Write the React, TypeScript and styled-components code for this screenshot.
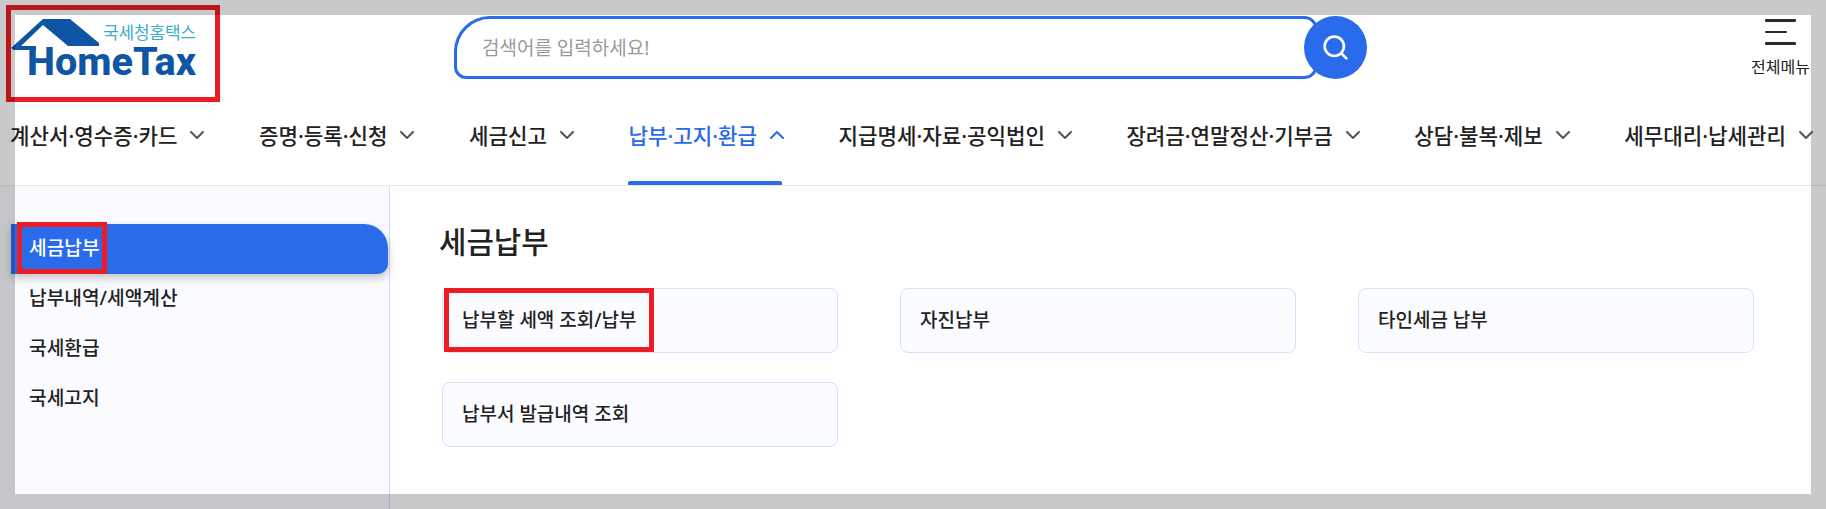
import React from 'react';
import styled, { createGlobalStyle } from 'styled-components';
import { ChevronDown, ChevronUp, Search } from 'lucide-react';

const GlobalStyle = createGlobalStyle`
  html, body {
    margin: 0;
    padding: 0;
    background: #fff;
  }
  body {
    font-family: "Noto Sans", "Noto Sans CJK KR", sans-serif;
    color: #222;
  }
  * {
    box-sizing: border-box;
  }
`;

const navItems = [
  { label: '계산서·영수증·카드' },
  { label: '증명·등록·신청' },
  { label: '세금신고' },
  { label: '납부·고지·환급', active: true },
  { label: '지급명세·자료·공익법인' },
  { label: '장려금·연말정산·기부금' },
  { label: '상담·불복·제보' },
  { label: '세무대리·납세관리' }
];

const sideItems = ['세금납부', '납부내역/세액계산', '국세환급', '국세고지'];

const cards = ['납부할 세액 조회/납부', '자진납부', '타인세금 납부', '납부서 발급내역 조회'];

const Logo = () => (
  <LogoSvg viewBox="0 0 230 100" width="230" height="100">
    <path
      d="M11 48 L43 19 H70 L99 43 V46 H68 L43 25 L21 46 H36 V50 H14 Z"
      fill="#0e56a5"
    />
    <text
      x="27"
      y="75"
      fontFamily="Roboto, sans-serif"
      fontWeight="800"
      fontSize="39.5"
      fill="#0e56a5"
      textLength="169"
      lengthAdjust="spacingAndGlyphs"
    >
      HomeTax
    </text>
    <text
      x="103"
      y="39"
      fontFamily="'Noto Sans CJK KR', sans-serif"
      fontWeight="400"
      fontSize="17"
      fill="#3badc8"
      textLength="93"
    >
      국세청홈택스
    </text>
  </LogoSvg>
);

export default function App() {
  return (
    <Page>
      <GlobalStyle />
      <TopRow>
        <Logo />
        <SearchBox>
          <SearchInput placeholder="검색어를 입력하세요!" />
          <SearchButton>
            <Search size={29} strokeWidth={2.2} color="#fff" />
          </SearchButton>
        </SearchBox>
        <MenuButton>
          <Bars>
            <Bar />
            <Bar $short />
            <Bar />
          </Bars>
          <MenuLabel>전체메뉴</MenuLabel>
        </MenuButton>
      </TopRow>

      <Nav>
        {navItems.map((item) => (
          <NavItem key={item.label} $active={item.active}>
            {item.label}
            <Chevron>
              {item.active ? (
                <ChevronUp size={24} strokeWidth={2} />
              ) : (
                <ChevronDown size={24} strokeWidth={2} color="#555" />
              )}
            </Chevron>
          </NavItem>
        ))}
      </Nav>

      <Body>
        <Sidebar>
          {sideItems.map((label, index) => (
            <SideItem key={label} $active={index === 0}>
              {label}
            </SideItem>
          ))}
        </Sidebar>
        <Main>
          <Heading>세금납부</Heading>
          <CardGrid>
            {cards.map((label) => (
              <Card key={label}>{label}</Card>
            ))}
          </CardGrid>
        </Main>
      </Body>

      <RedBox $left={6} $top={5} $width={214} $height={97} />
      <RedBox $left={17} $top={222} $width={90} $height={52} />
      <RedBox $left={444} $top={288} $width={210} $height={64} />
      <Frame />
    </Page>
  );
}

const Page = styled.div`
  position: relative;
  width: 1826px;
  height: 509px;
  overflow: hidden;
  background: #fff;
`;

const TopRow = styled.header`
  display: flex;
  align-items: flex-start;
  height: 100px;
`;

const LogoSvg = styled.svg`
  display: block;
  flex: none;
`;

const SearchBox = styled.div`
  display: flex;
  align-items: center;
  margin: 16px 0 0 224px;
`;

const SearchInput = styled.input`
  width: 864px;
  height: 63px;
  padding: 0 0 0 25px;
  border: 3px solid #2a6bec;
  border-radius: 36px 14px 14px 12px;
  outline: none;
  background: #fff;
  font: 400 19px "Noto Sans", "Noto Sans CJK KR", sans-serif;
  color: #222;

  &::placeholder {
    color: #999;
    opacity: 1;
  }
`;

const SearchButton = styled.button`
  display: flex;
  align-items: center;
  justify-content: center;
  flex: none;
  width: 63px;
  height: 63px;
  margin-left: -14px;
  padding: 0;
  border: 0;
  border-radius: 50%;
  background: #2a6bec;
  z-index: 1;
`;

const MenuButton = styled.div`
  display: flex;
  flex-direction: column;
  align-items: center;
  margin: 19px 0 0 auto;
  padding-right: 16px;
`;

const Bars = styled.div`
  display: flex;
  flex-direction: column;
  align-items: flex-start;
  gap: 9px;
  width: 31px;
`;

const Bar = styled.span<{ $short?: boolean }>`
  display: block;
  width: ${(p) => (p.$short ? '22px' : '31px')};
  height: ${(p) => (p.$short ? '2px' : '3px')};
  border-radius: 1px;
  background: #2b2b2b;
`;

const MenuLabel = styled.span`
  margin-top: 12px;
  font-size: 16px;
  font-weight: 400;
  line-height: 20px;
  color: #222;
  white-space: nowrap;
`;

const Nav = styled.nav`
  display: flex;
  gap: 49.5px;
  height: 86px;
  padding-left: 10px;
  border-bottom: 1px solid #e6e8ec;
`;

const NavItem = styled.div<{ $active?: boolean }>`
  position: relative;
  display: flex;
  align-items: center;
  gap: 8px;
  flex: none;
  height: 68px;
  font-size: 21.2px;
  font-weight: 500;
  color: ${(p) => (p.$active ? '#2a6bec' : '#222')};
  white-space: nowrap;

  &::after {
    content: '';
    display: ${(p) => (p.$active ? 'block' : 'none')};
    position: absolute;
    left: 0;
    right: 7px;
    top: 81px;
    height: 4px;
    border-radius: 2px 2px 0 0;
    background: #2a6bec;
  }
`;

const Chevron = styled.span`
  display: flex;
  margin-top: 2px;
`;

const Body = styled.div`
  display: flex;
  height: 323px;
`;

const Sidebar = styled.aside`
  flex: none;
  width: 390px;
  padding: 38px 1px 0 11px;
  border-right: 1px solid #cfdcf8;
  background: #f9fbff;
`;

const SideItem = styled.div<{ $active?: boolean }>`
  display: flex;
  align-items: center;
  height: 50px;
  padding: 0 0 4px 18px;
  border-radius: 0 24px 10px 0;
  font-size: 19.2px;
  font-weight: 500;
  color: ${(p) => (p.$active ? '#fff' : '#222')};
  background: ${(p) => (p.$active ? '#2a6bec' : 'transparent')};
  box-shadow: ${(p) => (p.$active ? '0 4px 10px rgba(0, 0, 0, 0.22)' : 'none')};
`;

const Main = styled.main`
  flex: 1;
  padding: 31px 0 0 49px;
`;

const Heading = styled.h2`
  margin: 0;
  font-size: 29.8px;
  font-weight: 500;
  line-height: 50px;
  color: #222;
`;

const CardGrid = styled.div`
  display: grid;
  grid-template-columns: repeat(3, 396px);
  grid-auto-rows: 65px;
  column-gap: 62px;
  row-gap: 29px;
  margin: 21px 0 0 3px;
`;

const Card = styled.div`
  display: flex;
  align-items: center;
  padding: 0 0 3px 19px;
  border: 1px solid #d3e1fb;
  border-radius: 8px;
  background: #fbfcff;
  font-size: 19px;
  font-weight: 500;
  color: #222;
`;

const RedBox = styled.div<{ $left: number; $top: number; $width: number; $height: number }>`
  position: absolute;
  left: ${(p) => p.$left}px;
  top: ${(p) => p.$top}px;
  width: ${(p) => p.$width}px;
  height: ${(p) => p.$height}px;
  border: 5px solid #ed1c24;
`;

const Frame = styled.div`
  position: absolute;
  inset: 0;
  border: 15px solid rgba(0, 0, 0, 0.21);
  pointer-events: none;
`;
